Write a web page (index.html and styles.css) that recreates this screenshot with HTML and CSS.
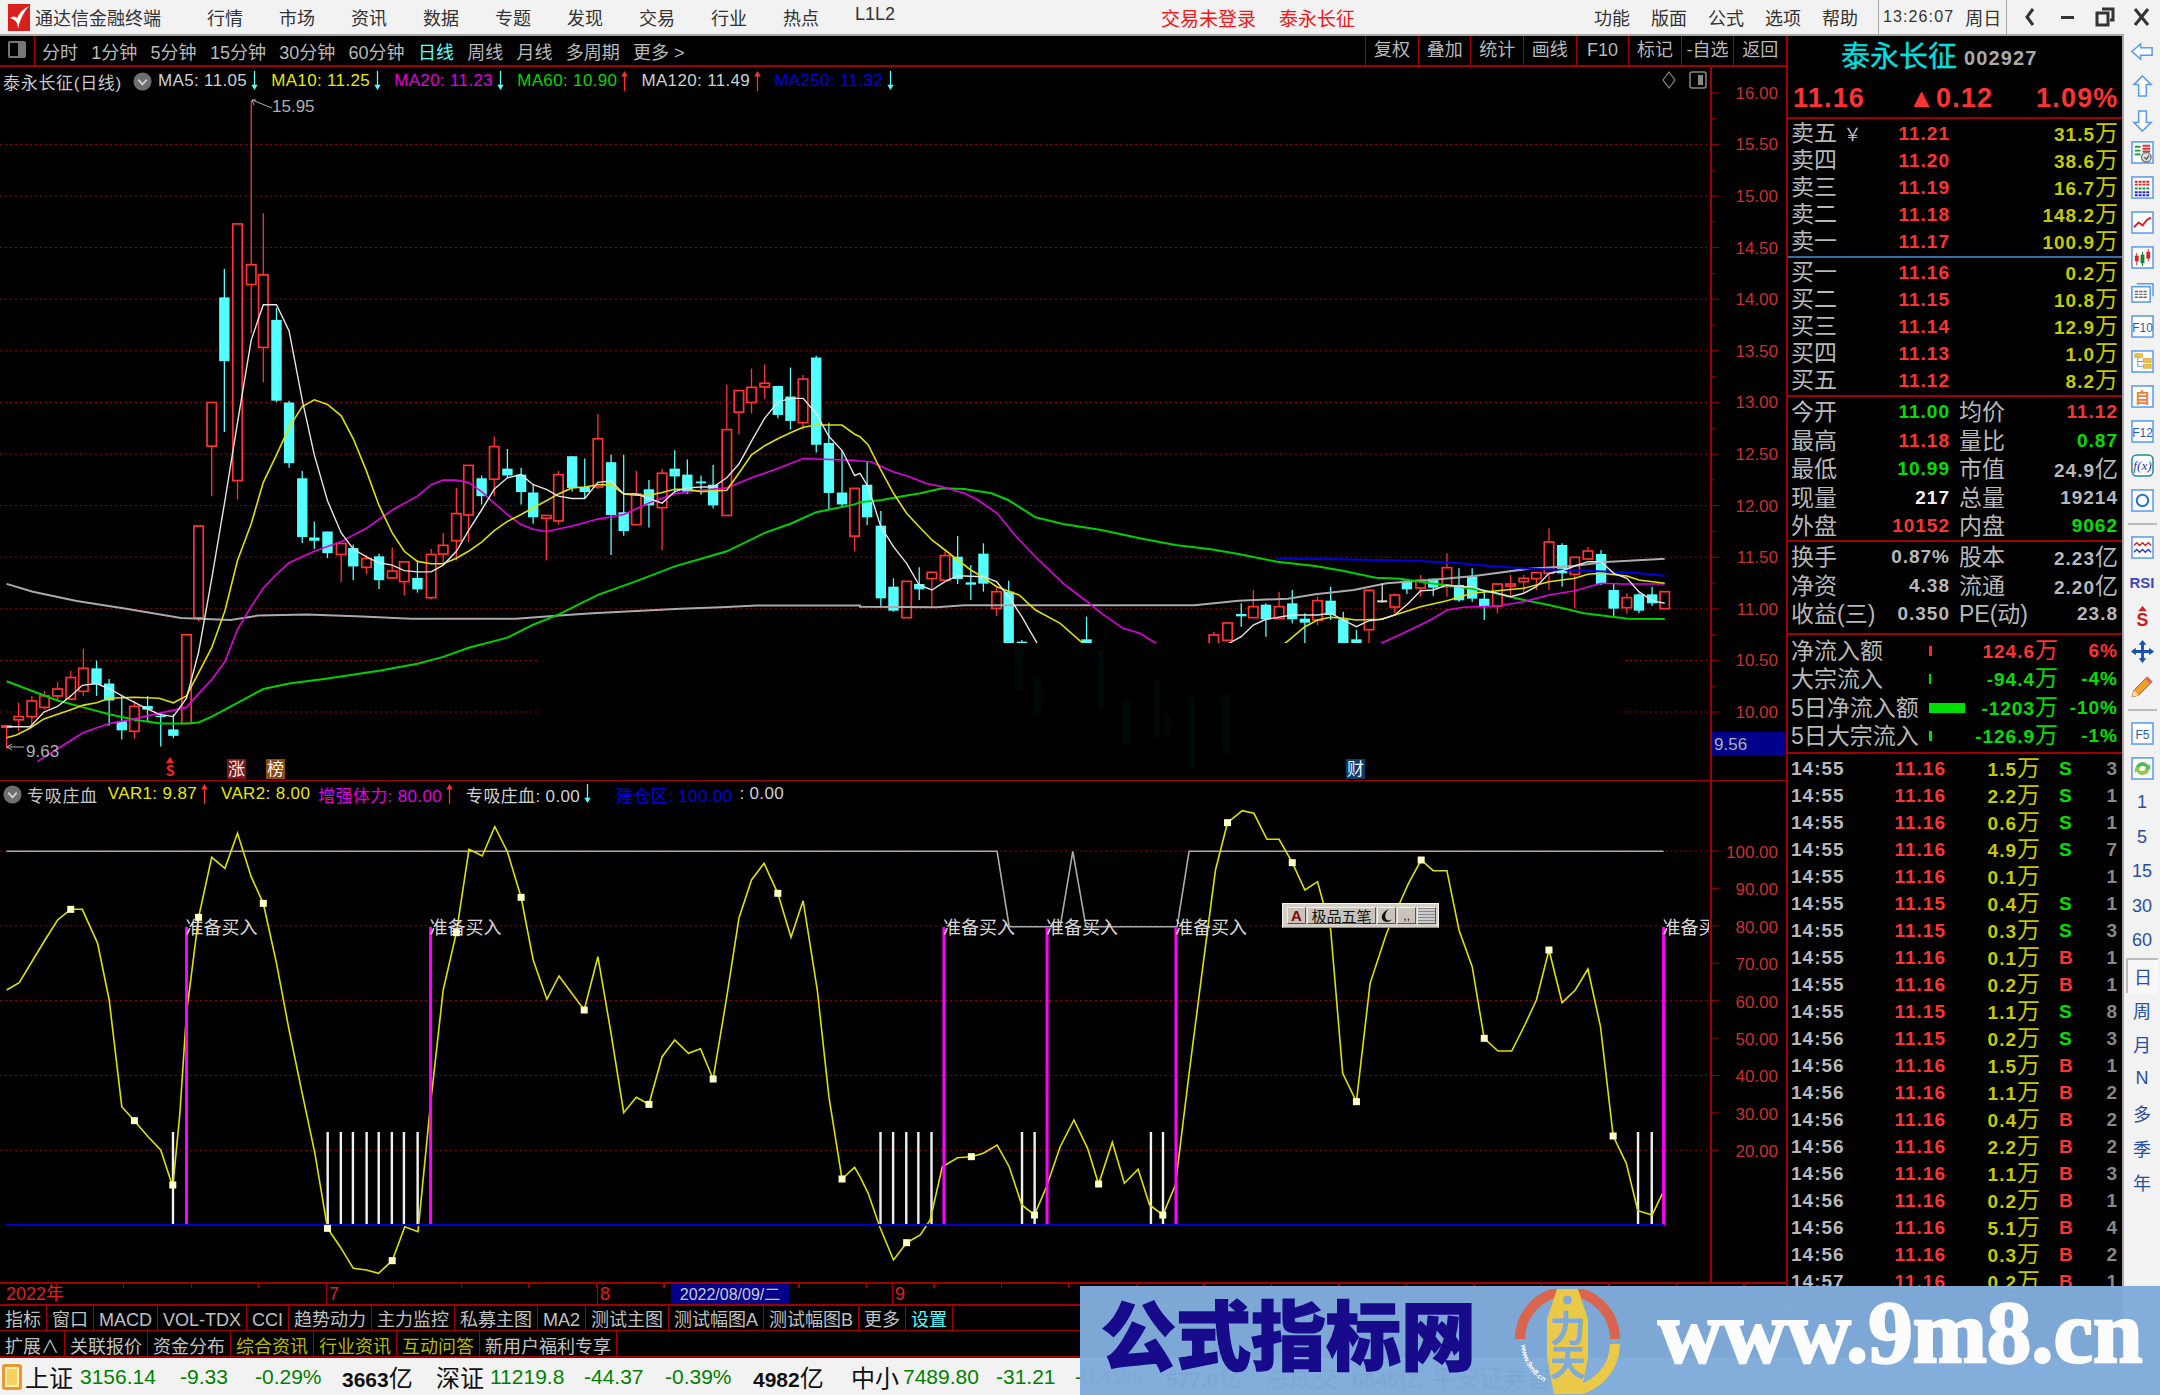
FILE: index.html

```html
<!DOCTYPE html>
<html lang="zh-CN">
<head>
    <meta charset="UTF-8">
    <title>通达信金融终端</title>
    <link rel="stylesheet" href="styles.css">
</head>
<body>
    <svg class="defs" width="0" height="0">
        <symbol id="arrow-up" viewBox="0 0 9 22"><path d="M4.5 0 L8 6 H5.2 V22 H3.8 V6 H1 Z" fill="#ff3232"/></symbol>
        <symbol id="arrow-down" viewBox="0 0 9 22"><path d="M3.8 0 H5.2 V15 H8 L4.5 21 L1 15 H3.8 Z" fill="#54ffff"/></symbol>
        <symbol id="pane-btn" viewBox="0 0 20 20"><circle cx="10" cy="10" r="9.5" fill="#6e6e6e"/><path d="M5.5 8 L10 13 L14.5 8" fill="none" stroke="#d0d0d0" stroke-width="2"/></symbol>
    </svg>

    <div class="app">
        <header class="titlebar">
            <svg class="app-logo" viewBox="0 0 22 27"><rect width="22" height="27" fill="#d8201c"/><path d="M2 14 C8 16 10 19 10 25 C12 15 16 8 21 2 C15 5 11 9 9 14 C7 12 5 12 2 14 Z" fill="#fff"/></svg>
            <span class="app-name">通达信金融终端</span>
            <nav class="menu">
                <span>行情</span><span>市场</span><span>资讯</span><span>数据</span><span>专题</span>
                <span>发现</span><span>交易</span><span>行业</span><span>热点</span><span>L1L2</span>
            </nav>
            <div class="title-alert"><span>交易未登录</span><span>泰永长征</span></div>
            <nav class="menu menu-right">
                <span>功能</span><span>版面</span><span>公式</span><span>选项</span><span>帮助</span>
            </nav>
            <div class="clock"><span class="clock-time">13:26:07</span><span>周日</span></div>
            <div class="win-controls">
                <svg viewBox="0 0 37 24"><path d="M21 4 L15 12 L21 20" fill="none" stroke="#333" stroke-width="3"/></svg>
                <svg viewBox="0 0 37 24"><rect x="12" y="11" width="13" height="3" fill="#333"/></svg>
                <svg viewBox="0 0 37 24"><path d="M16 4 H27 V15 H24 M11 8 H22 V20 H11 Z" fill="none" stroke="#333" stroke-width="3"/></svg>
                <svg viewBox="0 0 37 24"><path d="M12 4 L25 20 M25 4 L12 20" stroke="#333" stroke-width="3"/></svg>
            </div>
        </header>

        <main class="workspace">
            <section class="charts">
                <div class="toolbar">
                    <div class="tool-toggle"><span></span></div>
                    <div class="periods">
                        <span>分时</span><span>1分钟</span><span>5分钟</span><span>15分钟</span><span>30分钟</span><span>60分钟</span>
                        <span class="active">日线</span><span>周线</span><span>月线</span><span>多周期</span><span>更多 &gt;</span>
                    </div>
                    <div class="tool-btns">
                        <span>复权</span><span>叠加</span><span>统计</span><span>画线</span><span>F10</span><span>标记</span><span>-自选</span><span>返回</span>
                    </div>
                </div>

                <div class="pane pane-main">
                    <svg id="kline" viewBox="0 67 1787 713" width="1787" height="713"></svg>
                    <div class="pane-info">
                        <span class="pane-name">泰永长征(日线)</span>
                        <svg class="pane-btn"><use href="#pane-btn"/></svg>
                        <span class="c-white">MA5: 11.05</span><svg class="arrow"><use href="#arrow-down"/></svg>
                        <span class="c-yellow">MA10: 11.25</span><svg class="arrow"><use href="#arrow-down"/></svg>
                        <span class="c-magenta">MA20: 11.23</span><svg class="arrow"><use href="#arrow-down"/></svg>
                        <span class="c-green">MA60: 10.90</span><svg class="arrow"><use href="#arrow-up"/></svg>
                        <span class="c-white">MA120: 11.49</span><svg class="arrow"><use href="#arrow-up"/></svg>
                        <span class="c-blue">MA250: 11.32</span><svg class="arrow"><use href="#arrow-down"/></svg>
                    </div>
                    <div class="pane-corner">
                        <svg viewBox="0 0 16 20" width="16" height="20"><path d="M8 2 L14 10 L8 18 L2 10 Z" fill="none" stroke="#888" stroke-width="1.2"/></svg>
                        <svg viewBox="0 0 18 20" width="18" height="20"><rect x="1" y="2" width="16" height="16" rx="2" fill="none" stroke="#888" stroke-width="1.5"/><rect x="9" y="5" width="5" height="10" fill="#888"/></svg>
                    </div>
                </div>

                <div class="pane pane-sub">
                    <svg id="sub" viewBox="0 781 1787 501" width="1787" height="501"></svg>
                    <div class="pane-info pane-info-sub">
                        <svg class="pane-btn"><use href="#pane-btn"/></svg>
                        <span class="pane-name">专吸庄血</span>
                        <span class="c-yellow">VAR1: 9.87</span><svg class="arrow"><use href="#arrow-up"/></svg>
                        <span class="c-yellow var2">VAR2: 8.00</span>
                        <span class="c-magenta">增强体力: 80.00</span><svg class="arrow"><use href="#arrow-up"/></svg>
                        <span class="c-white">专吸庄血: 0.00</span><svg class="arrow"><use href="#arrow-down"/></svg>
                        <span class="c-blue build">建仓区: 100.00</span><span class="c-white">: 0.00</span>
                    </div>
                    <div class="ime">
                        <span class="ime-a">A</span>
                        <span class="ime-name">极品五笔</span>
                        <span class="ime-btn"><svg viewBox="0 0 14 16" width="14" height="16"><path d="M9 1 C5 4 4 10 7 12 C9 13 11 12 12 11 C10 15 4 15 2 11 C1 7 4 3 9 1 Z" fill="#111"/></svg></span>
                        <span class="ime-btn">,,</span>
                        <span class="ime-btn ime-kb"></span>
                    </div>
                </div>

                <div class="timeline">
                    <span class="t-year">2022年</span>
                    <span class="t-month t-7">7</span>
                    <span class="t-month t-8">8</span>
                    <span class="t-cursor">2022/08/09/二</span>
                    <span class="t-month t-9">9</span>
                </div>

                <div class="tabs">
                    <span>指标</span><span>窗口</span><span>MACD</span><span>VOL-TDX</span><span>CCI</span><span>趋势动力</span><span>主力监控</span>
                    <span>私募主图</span><span>MA2</span><span>测试主图</span><span>测试幅图A</span><span>测试幅图B</span><span>更多</span><span class="cyan">设置</span>
                </div>
                <div class="tabs tabs-ext">
                    <span>扩展∧</span><span>关联报价</span><span>资金分布</span><span class="gold">综合资讯</span><span class="gold">行业资讯</span><span class="gold">互动问答</span><span>新用户福利专享</span>
                </div>
            </section>

            <aside class="quote">
                <div class="q-head"><span class="q-name">泰永长征</span><span class="q-code">002927</span></div>
                <div class="q-price"><span>11.16</span><span>▲0.12</span><span>1.09%</span></div>

                <div class="book">
                    <div class="book-row"><span>卖五 <small>￥</small></span><b class="red">11.21</b><b class="vol">31.5<i>万</i></b></div>
                    <div class="book-row"><span>卖四</span><b class="red">11.20</b><b class="vol">38.6<i>万</i></b></div>
                    <div class="book-row"><span>卖三</span><b class="red">11.19</b><b class="vol">16.7<i>万</i></b></div>
                    <div class="book-row"><span>卖二</span><b class="red">11.18</b><b class="vol">148.2<i>万</i></b></div>
                    <div class="book-row"><span>卖一</span><b class="red">11.17</b><b class="vol">100.9<i>万</i></b></div>
                </div>
                <div class="book book-buy">
                    <div class="book-row"><span>买一</span><b class="red">11.16</b><b class="vol">0.2<i>万</i></b></div>
                    <div class="book-row"><span>买二</span><b class="red">11.15</b><b class="vol">10.8<i>万</i></b></div>
                    <div class="book-row"><span>买三</span><b class="red">11.14</b><b class="vol">12.9<i>万</i></b></div>
                    <div class="book-row"><span>买四</span><b class="red">11.13</b><b class="vol">1.0<i>万</i></b></div>
                    <div class="book-row"><span>买五</span><b class="red">11.12</b><b class="vol">8.2<i>万</i></b></div>
                </div>

                <div class="stats">
                    <div class="stat-row"><span>今开</span><b class="green">11.00</b><span>均价</span><b class="red">11.12</b></div>
                    <div class="stat-row"><span>最高</span><b class="red">11.18</b><span>量比</span><b class="green">0.87</b></div>
                    <div class="stat-row"><span>最低</span><b class="green">10.99</b><span>市值</span><b>24.9<i>亿</i></b></div>
                    <div class="stat-row"><span>现量</span><b class="white">217</b><span>总量</span><b>19214</b></div>
                    <div class="stat-row"><span>外盘</span><b class="red">10152</b><span>内盘</span><b class="green">9062</b></div>
                </div>
                <div class="stats stats-b">
                    <div class="stat-row"><span>换手</span><b>0.87%</b><span>股本</span><b>2.23<i>亿</i></b></div>
                    <div class="stat-row"><span>净资</span><b>4.38</b><span>流通</span><b>2.20<i>亿</i></b></div>
                    <div class="stat-row"><span>收益(三)</span><b>0.350</b><span>PE(动)</span><b>23.8</b></div>
                </div>

                <div class="flows">
                    <div class="flow-row"><span>净流入额</span><em class="bar bar-r"></em><b class="red">124.6<i>万</i></b><b class="red">6%</b></div>
                    <div class="flow-row"><span>大宗流入</span><em class="bar bar-g bar-thin"></em><b class="green">-94.4<i>万</i></b><b class="green">-4%</b></div>
                    <div class="flow-row"><span>5日净流入额</span><em class="bar bar-g bar-wide"></em><b class="green">-1203<i>万</i></b><b class="green">-10%</b></div>
                    <div class="flow-row"><span>5日大宗流入</span><em class="bar bar-g"></em><b class="green">-126.9<i>万</i></b><b class="green">-1%</b></div>
                </div>

                <div class="ticks">
                    <div class="tick"><b>14:55</b><b class="red">11.16</b><b class="vol">1.5<i>万</i></b><b class="bs green">S</b><b class="n">3</b></div>
                    <div class="tick"><b>14:55</b><b class="red">11.16</b><b class="vol">2.2<i>万</i></b><b class="bs green">S</b><b class="n">1</b></div>
                    <div class="tick"><b>14:55</b><b class="red">11.16</b><b class="vol">0.6<i>万</i></b><b class="bs green">S</b><b class="n">1</b></div>
                    <div class="tick"><b>14:55</b><b class="red">11.16</b><b class="vol">4.9<i>万</i></b><b class="bs green">S</b><b class="n">7</b></div>
                    <div class="tick"><b>14:55</b><b class="red">11.16</b><b class="vol">0.1<i>万</i></b><b class="bs"></b><b class="n">1</b></div>
                    <div class="tick"><b>14:55</b><b class="red">11.15</b><b class="vol">0.4<i>万</i></b><b class="bs green">S</b><b class="n">1</b></div>
                    <div class="tick"><b>14:55</b><b class="red">11.15</b><b class="vol">0.3<i>万</i></b><b class="bs green">S</b><b class="n">3</b></div>
                    <div class="tick"><b>14:55</b><b class="red">11.16</b><b class="vol">0.1<i>万</i></b><b class="bs red">B</b><b class="n">1</b></div>
                    <div class="tick"><b>14:55</b><b class="red">11.16</b><b class="vol">0.2<i>万</i></b><b class="bs red">B</b><b class="n">1</b></div>
                    <div class="tick"><b>14:55</b><b class="red">11.15</b><b class="vol">1.1<i>万</i></b><b class="bs green">S</b><b class="n">8</b></div>
                    <div class="tick"><b>14:56</b><b class="red">11.15</b><b class="vol">0.2<i>万</i></b><b class="bs green">S</b><b class="n">3</b></div>
                    <div class="tick"><b>14:56</b><b class="red">11.16</b><b class="vol">1.5<i>万</i></b><b class="bs red">B</b><b class="n">1</b></div>
                    <div class="tick"><b>14:56</b><b class="red">11.16</b><b class="vol">1.1<i>万</i></b><b class="bs red">B</b><b class="n">2</b></div>
                    <div class="tick"><b>14:56</b><b class="red">11.16</b><b class="vol">0.4<i>万</i></b><b class="bs red">B</b><b class="n">2</b></div>
                    <div class="tick"><b>14:56</b><b class="red">11.16</b><b class="vol">2.2<i>万</i></b><b class="bs red">B</b><b class="n">2</b></div>
                    <div class="tick"><b>14:56</b><b class="red">11.16</b><b class="vol">1.1<i>万</i></b><b class="bs red">B</b><b class="n">3</b></div>
                    <div class="tick"><b>14:56</b><b class="red">11.16</b><b class="vol">0.2<i>万</i></b><b class="bs red">B</b><b class="n">1</b></div>
                    <div class="tick"><b>14:56</b><b class="red">11.16</b><b class="vol">5.1<i>万</i></b><b class="bs red">B</b><b class="n">4</b></div>
                    <div class="tick"><b>14:56</b><b class="red">11.16</b><b class="vol">0.3<i>万</i></b><b class="bs red">B</b><b class="n">2</b></div>
                    <div class="tick"><b>14:57</b><b class="red">11.16</b><b class="vol">0.2<i>万</i></b><b class="bs red">B</b><b class="n">1</b></div>
                </div>
            </aside>
        </main>

        <aside class="side">
            <div class="side-item"><svg class="ico" viewBox="0 0 24 24"><path class="arr" d="M1 12 L10 4 V8 H22 V16 H10 V20 Z"/></svg></div>
            <div class="side-item"><svg class="ico" viewBox="0 0 24 24"><path class="arr" d="M12 1 L21 10 H16 V22 H8 V10 H3 Z"/></svg></div>
            <div class="side-item side-gap"><svg class="ico" viewBox="0 0 24 24"><path class="arr" d="M12 23 L21 14 H16 V2 H8 V14 H3 Z"/></svg></div>
            <div class="side-item"><svg class="ico" viewBox="0 0 24 24"><rect class="box" x="1" y="1" width="22" height="22"/><path d="M4 6 H10 M4 10 H10" stroke="#1a9a3a" stroke-width="2"/><path d="M12 5 H20 M12 8 H20 M12 11 H20" stroke="#e03030" stroke-width="2"/><path d="M4 14 H10" stroke="#1a9a3a" stroke-width="2"/><circle cx="16" cy="17" r="5" fill="#ddd" stroke="#777" stroke-width="1.5"/><path d="M14 17 L16 19 L19 15" fill="none" stroke="#555" stroke-width="1.3"/></svg></div>
            <div class="side-item"><svg class="ico" viewBox="0 0 24 24"><rect class="box" x="1" y="1" width="22" height="22"/><path d="M4 6 H20 M4 9 H20" stroke="#e02020" stroke-width="2" stroke-dasharray="3 1"/><path d="M4 13 H20" stroke="#1a9a3a" stroke-width="2" stroke-dasharray="3 1"/><path d="M4 17 H20 M4 20 H20" stroke="#2020d0" stroke-width="2" stroke-dasharray="3 1"/></svg></div>
            <div class="side-item"><svg class="ico" viewBox="0 0 24 24"><rect class="box" x="1" y="1" width="22" height="22"/><path d="M3 17 L8 12 L12 15 L17 9 L21 7" fill="none" stroke="#e02020" stroke-width="2"/></svg></div>
            <div class="side-item"><svg class="ico" viewBox="0 0 24 24"><rect class="box" x="1" y="1" width="22" height="22"/><path d="M6 7 V20" stroke="#e02020"/><rect x="4" y="10" width="4" height="6" fill="#e02020"/><path d="M12 6 V21" stroke="#0a8a2a"/><rect x="10" y="9" width="4" height="9" fill="#0a8a2a"/><path d="M18 3 V16" stroke="#e02020"/><rect x="16" y="6" width="4" height="7" fill="#e02020"/></svg></div>
            <div class="side-item"><svg class="ico" viewBox="0 0 24 24"><path d="M6 4 H23 V17" fill="none" stroke="#5b9be8" stroke-width="1.6"/><rect class="box" x="1" y="7" width="19" height="16"/><path d="M4 12 H17 M4 15 H17 M4 18 H17" stroke="#666" stroke-width="1.5" stroke-dasharray="3.5 1"/></svg></div>
            <div class="side-item"><svg class="ico" viewBox="0 0 24 24"><rect class="box" x="1" y="1" width="22" height="22"/><text class="ico-t" x="12" y="17.5">F10</text></svg></div>
            <div class="side-item"><svg class="ico" viewBox="0 0 24 24"><rect class="box" x="1" y="1" width="22" height="22"/><path d="M7 7 V17 H13 M7 12 H13" fill="none" stroke="#5b9be8"/><rect x="4" y="4" width="8" height="4" fill="#f0c040" stroke="#c09020" stroke-width=".6"/><rect x="13" y="9" width="8" height="4" fill="#f0c040" stroke="#c09020" stroke-width=".6"/><rect x="13" y="15" width="8" height="4" fill="#f0c040" stroke="#c09020" stroke-width=".6"/></svg></div>
            <div class="side-item"><svg class="ico" viewBox="0 0 24 24"><rect class="box" x="1" y="1" width="22" height="22"/><text class="ico-t ico-zi" x="12" y="18.5">自</text></svg></div>
            <div class="side-item"><svg class="ico" viewBox="0 0 24 24"><rect class="box" x="1" y="1" width="22" height="22"/><text class="ico-t" x="12" y="17.5">F12</text></svg></div>
            <div class="side-item"><svg class="ico" viewBox="0 0 24 24"><rect x="1" y="1" width="22" height="22" rx="5" fill="#fff" stroke="#2a8a8a" stroke-width="1.6"/><text class="ico-t ico-fx" x="12" y="17">f(x)</text></svg></div>
            <div class="side-item"><svg class="ico" viewBox="0 0 24 24"><rect class="box" x="1" y="1" width="22" height="22"/><circle cx="12" cy="12" r="6" fill="none" stroke="#2a78c8" stroke-width="2.2"/></svg></div>
            <div class="side-sep"></div>
            <div class="side-item"><svg class="ico" viewBox="0 0 24 24"><rect class="box" x="1" y="1" width="22" height="22"/><path d="M3 10 L6 7 L9 10 L12 7 L15 10 L18 7 L21 10" fill="none" stroke="#e02020" stroke-width="1.4"/><path d="M3 17 L6 14 L9 17 L12 14 L15 17 L18 14 L21 17" fill="none" stroke="#3030d0" stroke-width="1.4"/></svg></div>
            <div class="side-item"><span class="rsi">RSI</span></div>
            <div class="side-item"><svg class="ico" viewBox="0 0 24 26"><path d="M12 0 L17 6 H7 Z" fill="#d02020"/><text class="ico-s" x="12" y="23">S</text></svg></div>
            <div class="side-item"><svg class="ico" viewBox="0 0 24 24"><path d="M12 0 L16 5 H13.5 V10.5 H19 V8 L24 12 L19 16 V13.5 H13.5 V19 H16 L12 24 L8 19 H10.5 V13.5 H5 V16 L0 12 L5 8 V10.5 H10.5 V5 H8 Z" fill="#1450b8"/></svg></div>
            <div class="side-item"><svg class="ico" viewBox="0 0 24 24"><path d="M1 23 L3 16 L17 2 L22 7 L8 21 Z" fill="#f0a030" stroke="#a06010"/><path d="M1 23 L3 16 L8 21 Z" fill="#f0e0b0"/><path d="M17 2 L22 7 L20 9 L15 4 Z" fill="#e06060"/></svg></div>
            <div class="side-sep"></div>
            <div class="side-item"><svg class="ico" viewBox="0 0 24 24"><rect class="box" x="1" y="1" width="22" height="22"/><text class="ico-t" x="12" y="17.5">F5</text></svg></div>
            <div class="side-item"><svg class="ico" viewBox="0 0 24 24"><rect class="box" x="1" y="1" width="22" height="22"/><path d="M5 11 A7 7 0 0 1 18 9 L20 7 V13 H14 L16 11 A5 5 0 0 0 8 12 Z" fill="#58b858"/><path d="M19 13 A7 7 0 0 1 6 15 L4 17 V11 H10 L8 13 A5 5 0 0 0 16 12 Z" fill="#90c850"/></svg></div>
            <div class="side-item side-t">1</div>
            <div class="side-item side-t">5</div>
            <div class="side-item side-t">15</div>
            <div class="side-item side-t">30</div>
            <div class="side-item side-t">60</div>
            <div class="side-item side-t side-on">日</div>
            <div class="side-item side-t">周</div>
            <div class="side-item side-t">月</div>
            <div class="side-item side-t">N</div>
            <div class="side-item side-t">多</div>
            <div class="side-item side-t">季</div>
            <div class="side-item side-t">年</div>
        </aside>

        <footer class="status">
            <span class="st-icon"></span>
            <span class="st-name">上证</span><span class="up">3156.14</span><span class="up">-9.33</span><span class="up">-0.29%</span><span class="amt">3663<i>亿</i></span>
            <span class="st-name">深证</span><span class="up">11219.8</span><span class="up">-44.37</span><span class="up">-0.39%</span><span class="amt">4982<i>亿</i></span>
            <span class="st-name">中小</span><span class="up">7489.80</span><span class="up">-31.21</span><span class="up">-0.41%</span><span class="amt">577.0<i>亿</i></span>
            <span class="st-name">总成交</span><span class="amt">6645<i>亿</i></span><span class="st-name">平安证券普</span>
        </footer>

        <div class="watermark">
            <span class="wm-title">公式指标网</span>
            <svg class="wm-logo" viewBox="0 0 105 105" width="105" height="105">
                <path d="M5 50 A47.5 47.5 0 0 1 100 50" fill="none" stroke="#d9654e" stroke-width="10"/>
                <path d="M100 55 A47.5 47.5 0 0 1 52 102" fill="none" stroke="#e9c947" stroke-width="10"/>
                <path d="M42 0 H63 L73 30 V68 L66 105 H39 L32 68 V30 Z" fill="#e9c947"/>
                <circle cx="52.5" cy="11" r="4.5" fill="#80abd9"/>
                <text class="wm-glyph" x="52.5" y="53">力</text>
                <text class="wm-glyph" x="52.5" y="87">天</text>
                <path id="wm-arc" d="M6 56 A47 47 0 0 0 46 99" fill="none"/>
                <text class="wm-small"><textPath href="#wm-arc">www.9m8.cn</textPath></text>
            </svg>
            <span class="wm-url">www.9m8.cn</span>
        </div>
    </div>

    <script src="chart.js"></script>
</body>
</html>
```

FILE: styles.css

```css
* {
    box-sizing: border-box;
}

body {
    margin: 0;
    background: #000;
    font-family: "Liberation Sans", "Noto Sans CJK SC", sans-serif;
}

.defs {
    position: absolute;
}

.app {
    position: relative;
    width: 2160px;
    height: 1395px;
    overflow: hidden;
    display: grid;
    grid-template-columns: 2122px 38px;
    grid-template-rows: 36px 1322px 37px;
}

/* title bar */
.titlebar {
    grid-column: 1 / 3;
    display: flex;
    align-items: center;
    height: 36px;
    padding-left: 8px;
    background: #f2f2f2;
    border-bottom: 2px solid #a8a8a8;
    font-size: 18px;
    color: #333;
    white-space: nowrap;
}

.titlebar > * {
    flex: none;
}

.app-logo {
    width: 22px;
    height: 27px;
}

.app-name {
    margin-left: 5px;
}

.menu {
    display: flex;
    gap: 36px;
    margin-left: 46px;
}

.menu-right {
    gap: 21px;
    margin-left: 239px;
}

.title-alert {
    display: flex;
    gap: 23px;
    margin-left: 266px;
    color: #f01818;
    font-size: 19px;
}

.clock {
    display: flex;
    gap: 11px;
    align-items: center;
    height: 34px;
    margin-left: 20px;
    padding: 0 5px 0 4px;
    border-left: 1px solid #aaa;
    border-right: 1px solid #aaa;
}

.clock-time {
    font-size: 16px;
    letter-spacing: 1.1px;
}

.win-controls {
    display: flex;
    margin-left: 5px;
}

.win-controls svg {
    width: 37px;
    height: 24px;
}

/* main area */
.workspace {
    grid-column: 1;
    grid-row: 2 / 3;
    display: flex;
    background: #000;
    overflow: hidden;
}

.charts {
    width: 1788px;
    border-right: 2px solid #a00000;
}

.toolbar {
    display: flex;
    height: 31px;
    border-bottom: 2px solid #a00000;
    font-size: 18px;
    color: #b8b8b8;
}

.tool-toggle {
    width: 35px;
    border-right: 1px solid #a00000;
    padding: 5px 8px;
}

.tool-toggle span {
    display: block;
    width: 18px;
    height: 17px;
    border: 2px solid #777;
    border-radius: 2px;
    border-right-width: 8px;
}

.periods {
    display: flex;
    gap: 13.3px;
    align-items: center;
    padding-left: 7px;
}

.periods .active {
    color: #54ffff;
}

.tool-btns {
    display: flex;
    margin-left: auto;
}

.tool-btns span {
    width: 52.6px;
    border-left: 1px solid #a00000;
    text-align: center;
    line-height: 28px;
}

.pane {
    position: relative;
    width: 1786px;
}

.pane svg {
    display: block;
}

.pane-main {
    height: 713px;
}

.pane-sub {
    height: 502px;
    border-top: 1px solid #a00000;
}

/* indicator captions lying over the charts */
.pane-info {
    position: absolute;
    left: 3px;
    top: 4px;
    height: 20px;
    display: flex;
    align-items: center;
    font-size: 17px;
    letter-spacing: .35px;
    white-space: nowrap;
}

.pane-info-sub {
    top: 3px;
}

.pane-info span {
    margin-right: 3px;
}

.pane-info .pane-name {
    margin-right: 6px;
    color: #c8c8c8;
    font-size: 17px;
    letter-spacing: .7px;
}

.pane-info-sub .pane-name {
    margin-right: 10px;
}

.pane-info .pane-btn {
    width: 19px;
    height: 19px;
    margin: 0 6px 0 5px;
}

.pane-info-sub .pane-btn {
    margin-left: 0;
    margin-right: 5px;
}

.pane-info .arrow {
    width: 9px;
    height: 20px;
    margin-right: 12px;
}

.pane-info .var2 {
    margin-right: 8px;
}

.pane-info .build {
    margin: 0 7px 0 12px;
}

.c-white { color: #d0d0d0; }
.c-yellow { color: #e8e800; }
.c-magenta { color: #e000e0; }
.c-green { color: #00d800; }
.c-blue { color: #0000e0; }

.pane-corner {
    position: absolute;
    left: 1661px;
    top: 3px;
    display: flex;
    gap: 12px;
}

.ime {
    position: absolute;
    left: 1282px;
    top: 122px;
    width: 157px;
    height: 25px;
    display: flex;
    gap: 1px;
    padding: 3px 2px 3px 4px;
    background: #d4d0c8;
    border: 1px solid #f4f4f0;
    border-bottom-color: #888;
    font-size: 15px;
    color: #111;
}

.ime span {
    display: flex;
    align-items: center;
    justify-content: center;
    background: #c8c4bc;
    border: 1px solid #eee;
    border-right-color: #555;
    border-bottom-color: #555;
}

.ime-a {
    width: 19px;
    color: #8b0000;
    font-weight: bold;
}

.ime-name {
    width: 70px;
    font-size: 15px;
}

.ime-btn {
    width: 19px;
    font-size: 12px;
}

.ime .ime-kb {
    background: repeating-linear-gradient(#888 0 1px, #ccc 1px 3px);
}

.timeline {
    position: relative;
    height: 24px;
    border-top: 2px solid #a00000;
    border-bottom: 2px solid #a00000;
    background: repeating-linear-gradient(90deg, #a00000 0 1px, transparent 1px 67.5px) 56px 0 / auto 4px no-repeat;
    color: #e02020;
    font-size: 18px;
    line-height: 21px;
}

.timeline span {
    position: absolute;
    top: 0;
    height: 20px;
}

.t-year {
    left: 6px;
}

.t-month {
    padding-left: 2px;
    border-left: 1px solid #a00000;
}

.t-7 { left: 326px; }
.t-8 { left: 597px; }
.t-9 { left: 892px; }

.t-cursor {
    left: 671px;
    width: 118px;
    background: #00008b;
    color: #ccc;
    font-size: 16px;
    text-align: center;
}

.tabs {
    display: flex;
    height: 25px;
    border-bottom: 1px solid #a00000;
    font-size: 18px;
    color: #c0c0c0;
}

.tabs-ext {
    height: 27px;
    border-bottom-width: 2px;
}

.tabs span {
    padding: 0 5px;
    border-right: 1px solid #a00000;
    line-height: 29px;
    white-space: nowrap;
}

.tabs-ext span {
    line-height: 33px;
}

.tabs .cyan { color: #54ffff; }
.tabs .gold { color: #b8b800; }

/* quote panel */
.quote {
    width: 334px;
    padding: 0 4px 0 3px;
    font-size: 23px;
    color: #b8b8b8;
    overflow: hidden;
}

.quote b {
    font-size: 19px;
    letter-spacing: 1px;
    color: #b8b8b8;
    text-align: right;
    white-space: nowrap;
}

.quote i {
    font-style: normal;
    font-weight: normal;
    font-size: 23px;
    letter-spacing: 0;
}

.quote .red { color: #ff3232; }
.quote .green { color: #00e000; }
.quote .white { color: #f4f4f4; }
.quote .vol { color: #c8c800; }
.quote .n { color: #888; }

.q-head {
    display: flex;
    align-items: flex-end;
    height: 42px;
    padding: 0 0 2px 50px;
}

.q-name {
    color: #00e0e0;
    font-size: 29px;
    line-height: 38px;
    -webkit-text-stroke: .3px #00e0e0;
}

.q-code {
    margin: 0 0 7px 7px;
    font-size: 20px;
    font-weight: bold;
    line-height: 22px;
    letter-spacing: 1.1px;
    color: #aaa;
}

.q-price {
    display: grid;
    grid-template-columns: 115px 128px 1fr;
    height: 41px;
    margin: 0 -4px 0 -3px;
    padding: 0 6px 0 5px;
    border-bottom: 2px solid #a00000;
    color: #ff3232;
    font-size: 27px;
    font-weight: bold;
    letter-spacing: 1.2px;
    line-height: 40px;
    white-space: nowrap;
}

.q-price span:last-child {
    text-align: right;
}

.book {
    margin: 0 -4px 0 -3px;
    padding: 0 4px 2px 3px;
    border-bottom: 2px solid #346ea8;
}

.book-row {
    display: grid;
    grid-template-columns: 104px 55px 1fr;
    height: 27px;
    line-height: 29px;
}

.book-buy {
    padding: 1px 4px 1px 3px;
    border-bottom-color: #a00000;
}

.book-buy .book-row {
    line-height: 27px;
}

.book-row small {
    font-size: 18px;
}

.stats {
    margin: 0 -4px 0 -3px;
    padding: 0 4px 0 3px;
    border-bottom: 2px solid #a00000;
}

.stats-b {
    padding-bottom: 5px;
}

.stat-row {
    display: grid;
    grid-template-columns: 100px 59px 69px 1fr;
    height: 28.6px;
    line-height: 30px;
    white-space: nowrap;
}

.stat-row span:nth-child(3) {
    padding-left: 9px;
}

.flows {
    margin: 0 -4px 0 -3px;
    padding: 0 4px 3px 3px;
    border-bottom: 2px solid #a00000;
}

.flow-row {
    display: grid;
    grid-template-columns: 138px 38px 91px 1fr;
    align-items: center;
    height: 28.5px;
    line-height: 30px;
    white-space: nowrap;
}

.bar {
    display: block;
    width: 3px;
    height: 10px;
}

.bar-r { background: #ff2020; }
.bar-g { background: #00e000; }
.bar-thin { width: 2px; }
.bar-wide { width: 36px; }

.ticks {
    padding-top: 1px;
}

.tick {
    display: grid;
    grid-template-columns: 52px 103px 94px 42px 1fr;
    height: 27px;
    line-height: 27px;
}

.tick b:first-child {
    text-align: left;
}

.quote .bs {
    padding-left: 19px;
    text-align: left;
    letter-spacing: 0;
}

/* right icon strip */
.side {
    grid-column: 2;
    grid-row: 2 / 4;
    margin-top: -2px;
    background: #f2f2f2;
    border-left: 2px solid #a8a8a8;
}

.side-item {
    display: flex;
    align-items: center;
    justify-content: center;
    height: 34.8px;
}

.side-gap {
    margin-bottom: -3px;
}

.ico {
    width: 23px;
    height: 23px;
    overflow: visible;
}

.ico .arr {
    fill: #fff;
    stroke: #5b9be8;
    stroke-width: 1.6;
}

.ico .box {
    fill: #fff;
    stroke: #5b9be8;
    stroke-width: 1.6;
}

.ico-t {
    font-size: 12.5px;
    fill: #2a5ab0;
    text-anchor: middle;
    font-family: "Liberation Sans", sans-serif;
}

.ico-zi {
    font-family: "Noto Sans CJK SC", sans-serif;
    font-size: 16px;
    font-weight: bold;
    fill: #f08040;
}

.ico-fx {
    font-family: "Liberation Serif", serif;
    font-style: italic;
    font-size: 14px;
    fill: #2040a0;
}

.ico-s {
    font-size: 20px;
    font-weight: bold;
    fill: #c82020;
    text-anchor: middle;
}

.rsi {
    font-size: 15px;
    font-weight: bold;
    color: #4048b8;
}

.side-sep {
    height: 2px;
    margin: 5px 3px 5px 4px;
    background: #bbb;
}

.side-t {
    height: 34.5px;
    color: #2a4fa0;
    font-size: 18px;
}

.side-on {
    width: 32px;
    margin-left: 2px;
    background: #f8f8f8;
    border-top: 2px solid #bbb;
    border-left: 2px solid #bbb;
}

/* bottom status row */
.status {
    grid-column: 1;
    display: grid;
    grid-template-columns: 25px 55px 100px 75px 87px 94px 54px 94px 81px 88px 98px 52px 93px 79px 91px 100px 86px 79px auto;
    align-items: center;
    height: 37px;
    background: #f2f2f2;
    font-size: 21px;
    color: #111;
    white-space: nowrap;
}

.st-icon {
    width: 20px;
    height: 26px;
    margin-left: 2px;
    background: #f8d060;
    border: 3px solid #e89830;
    border-radius: 3px;
    box-shadow: inset 0 0 0 2px #fff0b0;
}

.st-name {
    font-size: 24px;
}

.up {
    color: #008000;
}

.amt {
    font-weight: bold;
}

.amt i {
    font-style: normal;
    font-weight: normal;
    font-size: 24px;
}

/* site watermark pasted over the corner */
.watermark {
    position: absolute;
    left: 1080px;
    top: 1286px;
    right: 0;
    bottom: 0;
    display: flex;
    align-items: center;
    padding-left: 21px;
    background: rgba(128, 171, 217, .975);
    white-space: nowrap;
}

.wm-title {
    width: 373px;
    color: #170b8c;
    font-family: "Noto Sans CJK SC", sans-serif;
    font-size: 75px;
    font-weight: 900;
    line-height: 80px;
    margin-top: -17px;
    -webkit-text-stroke: 1.5px #170b8c;
}

.wm-logo {
    flex: none;
    margin: 1px 0 0 41px;
}

.wm-glyph {
    font-family: "Noto Sans CJK SC", sans-serif;
    font-size: 36px;
    font-weight: bold;
    fill: #80abd9;
    text-anchor: middle;
}

.wm-small {
    font-size: 7.5px;
    font-weight: bold;
    fill: #fff;
}

.wm-url {
    margin: -18px 0 0 38px;
    color: #fcfcfc;
    font-family: "Liberation Serif", serif;
    font-size: 89px;
    font-weight: bold;
    line-height: 90px;
    -webkit-text-stroke: 2.5px #fcfcfc;
}

/* svg parts drawn by chart.js */
.grid-line {
    stroke: #a00000;
    stroke-width: 1;
    stroke-dasharray: 2 3;
}

.axis-line {
    stroke: #a00000;
    stroke-width: 2;
}

.axis-tick {
    stroke: #a00000;
}

.axis-label {
    fill: #c83030;
    font-size: 17px;
    text-anchor: end;
}

.peak-label {
    fill: #b0b0b0;
    font-size: 17px;
}

.sub-label {
    fill: #d8d8d8;
    font-size: 18px;
    font-family: "Noto Sans CJK SC", sans-serif;
}

.mark-label {
    fill: #f0f0f0;
    font-size: 17px;
    font-family: "Noto Sans CJK SC", sans-serif;
    text-anchor: middle;
}

.mark-s {
    fill: #ff2020;
    font-size: 14px;
    font-weight: bold;
}
```

FILE: chart.js

```js
const NS = 'http://www.w3.org/2000/svg';
const kline = document.getElementById('kline');
const sub = document.getElementById('sub');

function add(svg, tag, attrs, text) {
    const el = document.createElementNS(NS, tag);
    for (const k in attrs) el.setAttribute(k, attrs[k]);
    if (text) el.textContent = text;
    svg.appendChild(el);
    return el;
}

// the series were read off two blow-ups of the chart, so each has its own scale
const left = (x, y) => [x / 1.823, 60 + y / 2.178];
const right = (x, y) => [860 + x / 1.823, 330 + y / 3];
const subLeft = (x, y) => [x / 1.823, 780 + y / 3];
const subRight = (x, y) => [860 + x / 1.823, 780 + y / 3];

// x, body top, body bottom, high, low, colour
const candlesLeft = [
    [12,1450,1453,1450,1500,'r'],[34,1430,1437,1400,1462,'r'],[58,1396,1430,1385,1450,'r'],[81,1385,1410,1375,1415,'r'],
    [105,1370,1385,1355,1395,'r'],[129,1345,1392,1330,1395,'r'],[152,1325,1375,1282,1385,'r'],[176,1325,1360,1308,1385,'c'],
    [199,1358,1395,1348,1450,'c'],[222,1440,1460,1385,1480,'c'],[245,1408,1462,1395,1478,'r'],[269,1407,1415,1385,1440,'c'],
    [293,1428,1431,1420,1495,'c'],[316,1458,1472,1425,1477,'c'],[340,1252,1445,1252,1445,'r'],[362,1015,1215,1015,1222,'r'],
    [386,746,841,746,950,'r'],[409,517,656,455,810,'c'],[433,357,916,357,957,'r'],[458,446,489,88,595,'r'],
    [480,468,626,334,702,'r'],[504,566,742,540,745,'c'],[527,746,878,742,888,'c'],[551,911,1039,895,1052,'c'],
    [573,1040,1047,1005,1065,'c'],[597,1027,1074,1027,1085,'c'],[622,1053,1077,1053,1137,'r'],[644,1063,1103,1055,1133,'c'],
    [668,1086,1105,1078,1120,'r'],[691,1081,1133,1075,1152,'c'],[715,1113,1128,1062,1128,'r'],[737,1093,1136,1093,1165,'r'],
    [761,1128,1153,1090,1160,'c'],[786,1077,1171,1065,1175,'r'],[808,1057,1076,1030,1095,'r'],[832,988,1047,932,1090,'r'],
    [854,883,991,883,1050,'r'],[878,911,950,905,968,'c'],[901,842,913,820,950,'r'],[925,890,905,847,910,'c'],
    [950,903,941,888,968,'c'],[972,942,996,925,1010,'c'],[996,992,998,992,1090,'r'],[1018,903,1004,895,1012,'r'],
    [1043,863,932,863,940,'c'],[1066,930,941,868,955,'c'],[1090,825,930,771,935,'r'],[1114,876,991,860,1078,'c'],
    [1137,985,1026,860,1036,'c'],[1160,945,1012,895,1012,'r'],[1183,935,970,915,1018,'c'],[1207,900,975,890,1068,'r'],
    [1230,890,907,850,942,'c'],[1253,903,940,870,945,'c'],[1278,918,922,905,947,'c'],[1300,925,970,882,977,'c'],
    [1325,805,992,707,992,'r'],[1347,720,767,720,815,'r'],[1370,713,746,672,770,'r'],[1394,704,712,663,738,'r'],
    [1418,710,773,710,780,'c'],[1441,733,786,670,805,'c'],[1464,695,790,686,805,'r'],[1488,648,838,644,855,'c'],
    [1511,834,943,790,980,'c'],[1535,942,968,850,975,'c'],[1558,933,1037,933,1070,'r']
];
const candlesRight = [
    [13,464,562,393,585,'c'],[38,587,805,543,830,'c'],[61,770,842,745,845,'c'],[85,754,863,754,863,'r'],
    [108,762,778,712,810,'c'],[131,727,746,725,830,'r'],[155,677,751,665,752,'r'],[178,680,747,618,762,'c'],
    [202,757,764,705,810,'c'],[225,671,761,640,785,'c'],[249,785,835,772,858,'r'],[271,785,960,752,960,'c'],
    [295,935,960,930,960,'c'],[413,928,960,860,960,'c'],[645,915,960,905,960,'r'],[670,879,931,876,935,'r'],
    [695,852,859,820,890,'c'],[717,830,863,780,863,'r'],[740,824,868,820,920,'c'],[764,830,866,785,868,'r'],
    [788,820,868,780,880,'c'],[811,866,878,850,940,'c'],[834,812,870,800,885,'r'],[858,812,855,770,870,'c'],
    [881,868,960,845,960,'c'],[905,928,960,900,960,'c'],[928,781,899,781,940,'r'],[975,795,831,790,850,'r'],
    [997,752,778,752,792,'c'],[1022,750,774,735,800,'r'],[1045,746,773,746,797,'c'],[1070,713,770,670,800,'r'],
    [1092,765,811,715,815,'c'],[1116,740,806,715,815,'c'],[1138,806,829,780,870,'c'],[1162,762,828,762,850,'r'],
    [1186,762,768,735,800,'r'],[1210,745,755,735,790,'r'],[1233,728,746,725,780,'r'],[1256,636,730,595,780,'r'],
    [1280,645,730,640,770,'c'],[1303,682,733,682,835,'r'],[1327,663,687,650,690,'r'],[1351,672,762,660,765,'c'],
    [1374,780,836,760,862,'c'],[1398,803,833,790,850,'r'],[1420,793,842,790,850,'c'],[1444,793,820,770,828,'c'],
    [1467,785,836,785,836,'r']
];

const lines = [
    { color: '#aaa', width: 2,
      a: [[12,1141],[60,1158],[140,1178],[230,1195],[330,1215],[420,1220],[470,1210],[560,1208],[660,1212],[750,1217],[940,1217],[1020,1210],[1080,1205],[1240,1195],[1315,1192],[1380,1188],[1568,1188]],
      b: [[0,830],[140,832],[190,826],[610,826],[690,812],[780,806],[830,793],[900,780],[960,760],[1040,750],[1120,738],[1220,716],[1300,708],[1360,696],[1467,686]] },
    { color: '#0000e0', width: 2,
      a: [],
      b: [[760,686],[870,688],[1010,692],[1080,698],[1150,708],[1220,716],[1320,722],[1410,728],[1467,737]] },
    { color: '#00d000', width: 2,
      a: [[12,1353],[60,1375],[105,1395],[152,1410],[199,1425],[245,1437],[293,1445],[340,1445],[362,1443],[386,1430],[433,1400],[480,1370],[527,1358],[597,1347],[691,1330],[761,1315],[808,1300],[854,1280],[925,1258],[972,1230],[1018,1208],[1090,1165],[1160,1135],[1230,1103],[1325,1070],[1394,1030],[1441,1010],[1488,985],[1558,968]],
      b: [[0,517],[40,510],[80,498],[110,490],[150,475],[190,477],[240,490],[270,510],[320,562],[370,582],[440,600],[510,625],[575,645],[640,658],[690,672],[760,695],[830,708],[880,722],[940,743],[985,746],[1040,760],[1090,770],[1140,782],[1210,810],[1256,825],[1320,850],[1400,866],[1467,867]] },
    { color: '#e000e0', width: 1.6,
      a: [[68,1528],[105,1500],[152,1465],[199,1445],[245,1435],[293,1422],[340,1410],[362,1380],[386,1350],[410,1310],[433,1240],[458,1190],[480,1150],[504,1120],[527,1095],[573,1070],[620,1050],[668,1020],[715,980],[761,950],[786,925],[808,915],[832,915],[854,920],[878,940],[901,965],[925,990],[950,1012],[972,1022],[996,1027],[1043,1015],[1090,1000],[1137,990],[1183,965],[1230,945],[1278,937],[1325,932],[1370,910],[1418,890],[1464,868],[1558,872]],
      b: [[0,393],[20,395],[60,425],[90,440],[120,460],[150,470],[190,490],[215,510],[250,550],[285,620],[320,680],[370,760],[410,810],[440,850],[480,895],[510,910],[560,960],[930,960],[950,940],[990,910],[1040,870],[1070,840],[1100,832],[1162,828],[1210,815],[1256,795],[1303,782],[1351,760],[1390,762],[1467,762]] },
    { color: '#e0e000', width: 1.6,
      a: [[12,1476],[30,1470],[55,1455],[80,1435],[105,1425],[129,1415],[152,1405],[176,1400],[199,1390],[245,1388],[290,1390],[316,1400],[340,1385],[362,1335],[386,1280],[410,1200],[433,1090],[458,1010],[480,920],[504,860],[527,800],[551,755],[573,740],[597,750],[622,775],[644,825],[668,895],[691,970],[715,1030],[737,1070],[761,1092],[786,1097],[808,1097],[832,1085],[854,1070],[878,1050],[901,1025],[925,1005],[950,990],[972,975],[996,960],[1018,945],[1043,932],[1066,930],[1090,925],[1114,925],[1137,945],[1160,948],[1183,948],[1207,942],[1230,935],[1253,935],[1278,940],[1325,937],[1347,900],[1370,860],[1394,840],[1418,825],[1441,812],[1464,800],[1488,795],[1535,795],[1558,815]],
      b: [[0,320],[15,345],[38,420],[61,490],[85,550],[108,590],[131,630],[155,660],[178,690],[202,720],[225,742],[249,770],[290,795],[320,840],[365,880],[420,960],[755,960],[775,940],[811,890],[834,870],[858,862],[881,865],[905,870],[950,868],[975,855],[1022,830],[1070,812],[1116,790],[1162,782],[1210,775],[1256,755],[1303,745],[1327,733],[1351,730],[1398,738],[1420,750],[1467,760]] },
    { color: '#e4e4e4', width: 1.4,
      a: [[12,1452],[55,1452],[80,1420],[105,1408],[129,1385],[150,1362],[176,1358],[200,1370],[230,1390],[260,1408],[290,1425],[316,1430],[340,1390],[362,1290],[386,1130],[410,960],[433,790],[458,610],[480,533],[504,533],[527,590],[551,740],[573,860],[597,960],[622,1030],[644,1065],[668,1082],[691,1095],[715,1100],[737,1112],[761,1115],[786,1115],[808,1100],[832,1070],[854,1025],[878,980],[901,935],[925,910],[950,903],[972,925],[996,935],[1018,950],[1043,955],[1066,955],[1090,920],[1114,917],[1137,945],[1160,945],[1183,955],[1207,965],[1230,940],[1253,932],[1278,930],[1300,930],[1325,910],[1347,880],[1370,830],[1394,780],[1418,745],[1441,737],[1464,737],[1488,770],[1511,820],[1535,850],[1558,905]],
      b: [[0,430],[15,470],[38,590],[61,650],[85,700],[108,765],[131,780],[155,755],[178,737],[225,740],[249,755],[271,800],[295,860],[330,960],[650,960],[695,920],[717,885],[740,868],[788,855],[834,855],[858,850],[881,870],[905,890],[928,872],[952,868],[975,855],[1000,820],[1022,782],[1045,780],[1070,765],[1092,770],[1116,770],[1138,782],[1162,790],[1186,800],[1210,790],[1233,770],[1256,730],[1280,722],[1303,708],[1327,695],[1351,695],[1374,730],[1398,745],[1420,785],[1444,812],[1467,820]] }
];

const pts = list => list.map(p => p.map(n => n.toFixed(1)).join(',')).join(' ');

function drawCandle(c, map) {
    const [x, top] = map(c[0], c[1]);
    const bottom = map(c[0], c[2])[1];
    const high = map(c[0], c[3])[1];
    const low = map(c[0], c[4])[1];
    const color = c[5] === 'r' ? '#ff3232' : '#54ffff';
    const h = Math.max(bottom - top, 1);
    add(kline, 'line', { x1: x, x2: x, y1: high, y2: low, stroke: color, 'stroke-width': 1.3 });
    if (c[5] === 'r') {
        add(kline, 'rect', { x: x - 4.7, y: top, width: 9.4, height: h, fill: '#000', stroke: color, 'stroke-width': 1.7 });
    } else {
        add(kline, 'rect', { x: x - 5.2, y: top, width: 10.4, height: h, fill: color });
    }
}

// price grid, 0.5 per 51.6px
for (let p = 15.5; p >= 10; p -= 0.5) {
    const y = 712 - (p - 10) * 103.2;
    add(kline, 'line', { class: 'grid-line', x1: 0, x2: 1708, y1: y, y2: y });
}

candlesLeft.forEach(c => drawCandle(c, left));
candlesRight.forEach(c => drawCandle(c, right));
lines.forEach(l => {
    const all = l.a.map(p => left(p[0], p[1])).concat(l.b.map(p => right(p[0], p[1])));
    add(kline, 'polyline', { points: pts(all), fill: 'none', stroke: l.color, 'stroke-width': l.width });
});

// white doji near the right end, drawn after the averages as in the reference
const doji = right(952, 814);
add(kline, 'line', { x1: doji[0], x2: doji[0], y1: right(0, 760)[1], y2: right(0, 818)[1], stroke: '#ddd', 'stroke-width': 1.3 });
add(kline, 'rect', { x: doji[0] - 5, y: doji[1] - 1, width: 10, height: 2, fill: '#ddd' });

// blacked out strip of the original capture, ghost candles barely show through
add(kline, 'rect', { x: 538, y: 643, width: 1083, height: 137, fill: '#000' });
[[1015,646,8,44],[1033,676,8,40],[1098,650,6,60],[1122,700,9,45],[1154,680,6,58],[1188,696,7,72],[1222,694,8,60],[1164,715,7,20]].forEach(g => {
    add(kline, 'rect', { x: g[0], y: g[1], width: g[2], height: g[3], fill: '#000707' });
});

// right price axis
add(kline, 'line', { class: 'axis-line', x1: 1711, x2: 1711, y1: 67, y2: 780 });
for (let p = 16; p >= 10; p -= 0.5) {
    const y = 712 - (p - 10) * 103.2;
    add(kline, 'line', { class: 'axis-tick', x1: 1711, x2: 1719, y1: y, y2: y });
    add(kline, 'line', { class: 'axis-tick', x1: 1711, x2: 1715, y1: y + 25.8, y2: y + 25.8 });
    add(kline, 'text', { class: 'axis-label', x: 1778, y: y + 6 }, p.toFixed(2));
}
add(kline, 'rect', { x: 1712, y: 732, width: 74, height: 24, fill: '#00008b' });
add(kline, 'text', { class: 'peak-label', x: 1714, y: 750 }, '9.56');

// high / low notes
add(kline, 'path', { d: 'M252 100 L256 100 M252 100 L254 105 M252 100 L272 108', stroke: '#b0b0b0', fill: 'none' });
add(kline, 'text', { class: 'peak-label', x: 272, y: 112 }, '15.95');
add(kline, 'path', { d: 'M7 747 H24 M7 747 L12 744 M7 747 L12 750', stroke: '#b0b0b0', fill: 'none' });
add(kline, 'text', { class: 'peak-label', x: 26, y: 757 }, '9.63');

// event marks along the bottom
add(kline, 'path', { d: 'M170 757 L174 763 H166 Z', fill: '#ff2020' });
add(kline, 'text', { class: 'mark-label mark-s', x: 170, y: 776 }, 'S');
add(kline, 'rect', { x: 227, y: 759, width: 19, height: 20, fill: '#7c1616' });
add(kline, 'text', { class: 'mark-label', x: 236.5, y: 775 }, '涨');
add(kline, 'rect', { x: 266, y: 759, width: 19, height: 20, fill: '#8a4a12' });
add(kline, 'text', { class: 'mark-label', x: 275.5, y: 775 }, '榜');
add(kline, 'rect', { x: 1346, y: 759, width: 19, height: 20, fill: '#0c3c6a' });
add(kline, 'text', { class: 'mark-label', x: 1355.5, y: 775 }, '财');

/* ---- lower indicator ---- */
const val = v => 1225 - v * 3.74;

[100, 80, 60, 40, 20].forEach(v => {
    add(sub, 'line', { class: 'grid-line', x1: 0, x2: 1708, y1: val(v), y2: val(v) });
});

add(sub, 'polyline', {
    points: pts([[12,214],[1568,214]].map(p => subLeft(p[0], p[1])).concat(
        [[250,214],[272,440],[365,440],[388,214],[412,440],[578,440],[600,214],[1465,214]].map(p => subRight(p[0], p[1])))),
    fill: 'none', stroke: '#aaa', 'stroke-width': 1.6
});

[315,597,621,643,668,690,714,736,761].map(x => subLeft(x, 0)[0])
    .concat([37,60,84,106,130,295,318,530,552,1418,1443].map(x => subRight(x, 0)[0]))
    .forEach(x => add(sub, 'rect', { x: x - 1, y: 1132, width: 2.4, height: 93, fill: '#f0f0f0' }));

const yellowLeft = [[12,630],[35,608],[60,540],[82,480],[105,420],[129,388],[150,388],[178,490],[199,660],[222,980],[245,1022],[270,1070],[293,1110],[315,1220],[328,1000],[340,700],[362,412],[386,232],[410,265],[433,160],[458,290],[480,370],[504,550],[527,750],[551,940],[574,1120],[597,1345],[620,1400],[644,1465],[668,1470],[690,1480],[715,1442],[738,1340],[762,1355],[785,970],[808,630],[832,458],[855,208],[879,228],[902,140],[925,215],[950,352],[972,540],[997,658],[1019,588],[1065,690],[1090,530],[1113,750],[1137,998],[1160,952],[1183,973],[1207,830],[1230,780],[1255,820],[1277,806],[1300,897],[1325,650],[1347,415],[1370,300],[1393,250],[1418,340],[1442,472],[1464,362],[1490,630],[1511,950],[1535,1197],[1558,1162]];
const yellowRight = [[0,1190],[15,1240],[36,1340],[61,1440],[85,1388],[110,1365],[128,1320],[150,1160],[178,1133],[203,1130],[225,1120],[250,1095],[272,1160],[295,1275],[318,1305],[340,1220],[365,1100],[390,1020],[415,1105],[435,1212],[460,1087],[482,1210],[507,1168],[528,1275],[552,1305],[575,1215],[600,880],[625,560],[648,270],[670,128],[697,92],[718,100],[742,178],[764,178],[788,248],[811,330],[834,305],[858,450],[880,880],[905,965],[930,610],[960,460],[985,365],[1000,310],[1023,240],[1045,272],[1070,272],[1092,450],[1116,560],[1138,775],[1163,813],[1188,813],[1212,735],[1233,660],[1256,510],[1280,668],[1304,630],[1327,567],[1350,740],[1373,1068],[1397,1150],[1418,1292],[1444,1305],[1463,1240]];

add(sub, 'polyline', {
    points: pts(yellowLeft.map(p => subLeft(p[0], p[1])).concat(yellowRight.map(p => subRight(p[0], p[1])))),
    fill: 'none', stroke: '#e0e000', 'stroke-width': 1.6
});

const clip = add(sub, 'clipPath', { id: 'plot-clip' });
add(clip, 'rect', { x: 0, y: 781, width: 1709, height: 501 });

[340,785].map(x => subLeft(x, 0)[0]).concat([153,341,576,1465].map(x => subRight(x, 0)[0])).forEach(x => {
    add(sub, 'rect', { x: x - 1.5, y: 927, width: 3, height: 298, fill: '#ff00ff' });
    add(sub, 'text', { class: 'sub-label', x: x - 1, y: 934, 'clip-path': 'url(#plot-clip)' }, '准备买入');
});

add(sub, 'line', { x1: 6, x2: 1664, y1: 1225, y2: 1225, stroke: '#0000d0', 'stroke-width': 2 });

[[129,388],[245,1022],[315,1215],[362,412],[480,370],[597,1345],[715,1442],[832,458],[950,352],[1065,690],[1183,973],[1300,897],[1418,340],[1535,1197]].map(p => subLeft(p[0], p[1]))
    .concat([[85,1388],[203,1130],[318,1305],[435,1212],[552,1305],[670,128],[788,248],[905,965],[1023,240],[1138,775],[1256,510],[1373,1068]].map(p => subRight(p[0], p[1])))
    .forEach(p => add(sub, 'rect', { x: p[0] - 3.5, y: p[1] - 3.5, width: 7, height: 7, fill: '#ffffc8' }));

add(sub, 'line', { class: 'axis-line', x1: 1711, x2: 1711, y1: 781, y2: 1282 });
for (let v = 100; v >= 20; v -= 10) {
    add(sub, 'line', { class: 'axis-tick', x1: 1711, x2: 1719, y1: val(v), y2: val(v) });
    add(sub, 'text', { class: 'axis-label', x: 1778, y: val(v) + 7 }, v.toFixed(2));
}
```
